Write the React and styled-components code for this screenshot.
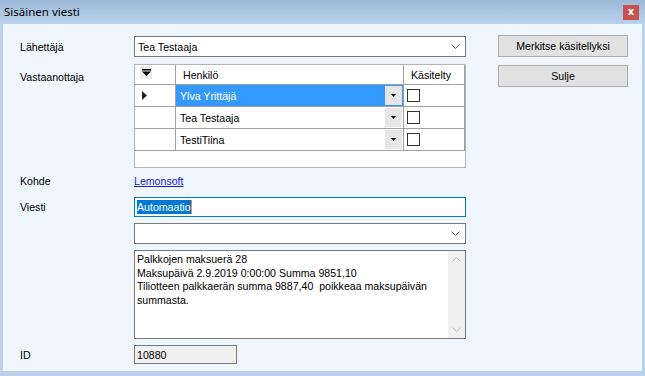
import React from "react";
import styled, { createGlobalStyle } from "styled-components";

const Global = createGlobalStyle`
  html, body { margin: 0; padding: 0; background: #fff; }
  body { font-family: "Liberation Sans", Arial, sans-serif; }
`;

const Window = styled.div`
  width: 645px;
  height: 376px;
  display: flex;
  flex-direction: column;
  background: #b9d1ea;
  box-sizing: border-box;
`;

const TitleBar = styled.div`
  height: 24px;
  flex: none;
  display: flex;
  justify-content: space-between;
  align-items: flex-start;
  padding: 0 6px 0 4px;
  background: linear-gradient(#9db9d9, #b9d1ea);
`;

const Title = styled.div`
  font-family: "Noto Sans", "Liberation Sans", sans-serif;
  font-size: 11.5px;
  line-height: 24px;
  color: #000;
`;

const CloseButton = styled.div`
  margin-top: 5px;
  width: 16px;
  height: 15px;
  background: #c75050;
  color: #fff;
  font-family: "DejaVu Sans", sans-serif;
  font-weight: bold;
  font-size: 10px;
  line-height: 14px;
  text-align: center;
`;

const Client = styled.div`
  flex: 1;
  margin: 0 3px 5px;
  background: #eff6fd;
  padding: 12px 0 0 17px;
  display: flex;
  flex-direction: column;
  font-family: "Liberation Sans", Arial, sans-serif;
  font-size: 10.6px;
  color: #000;
`;

const TopSection = styled.div`
  display: flex;
  align-items: flex-start;
`;

const TopFields = styled.div`
  display: flex;
  flex-direction: column;
`;

const ButtonColumn = styled.div`
  display: flex;
  flex-direction: column;
  gap: 8px;
  margin-left: 32px;
  margin-top: -1px;
`;

const Button = styled.div`
  width: 130px;
  height: 22px;
  box-sizing: border-box;
  border: 1px solid #adadad;
  background: #e1e1e1;
  display: flex;
  align-items: center;
  justify-content: center;
`;

const Row = styled.div`
  display: grid;
  grid-template-columns: 114px 332px;
  align-items: ${(p) => (p.$top ? "start" : "center")};
  margin-top: ${(p) => p.$mt || 0}px;
`;

const Label = styled.div`
  padding-top: ${(p) => p.$pt || 0}px;
  line-height: 14px;
`;

const Combo = styled.div`
  height: 21px;
  box-sizing: border-box;
  border: 1px solid #7a7a7a;
  background: #fff;
  display: flex;
  align-items: center;
  justify-content: space-between;
  padding: 0 5px 0 3px;
`;

const Chevron = ({ up, color = "#555" }) => (
  <svg width="9" height="5" viewBox="0 0 9 5">
    <polyline
      points={up ? "0.5,4.5 4.5,0.5 8.5,4.5" : "0.5,0.5 4.5,4.5 8.5,0.5"}
      fill="none"
      stroke={color}
      strokeWidth="1"
    />
  </svg>
);

const DataGrid = styled.div`
  height: 104px;
  box-sizing: border-box;
  border: 1px solid #b4b4b4;
  background: #fff;
  display: flex;
  flex-direction: column;
`;

const GridRow = styled.div`
  display: grid;
  grid-template-columns: 41px 228px 61px;
  height: ${(p) => p.$h}px;
`;

const Cell = styled.div`
  box-sizing: border-box;
  border-right: 1px solid #a0a0a0;
  border-bottom: 1px solid #a0a0a0;
  display: flex;
  align-items: center;
  padding-left: ${(p) => p.$pl || 0}px;
  background: ${(p) => (p.$selected ? "#3399ff" : "#fff")};
  color: ${(p) => (p.$selected ? "#fff" : "#000")};
`;

const CellText = styled.span`
  flex: 1;
  white-space: nowrap;
`;

const HeaderIcon = styled.div`
  width: 12px;
  height: 12px;
  background: #ececec;
  display: flex;
  align-items: center;
  justify-content: center;
  margin-left: 5px;
  margin-top: -4px;
`;

const DropButton = styled.div`
  width: 17px;
  align-self: stretch;
  margin: 1px 1px 1px 0;
  background: #e6e6e6;
  display: flex;
  align-items: center;
  justify-content: center;
`;

const CheckBox = styled.div`
  width: 13px;
  height: 13px;
  box-sizing: border-box;
  border: 1px solid #333;
  background: #fff;
  margin-left: 3px;
`;

const Link = styled.a`
  color: #1a1ad8;
  text-decoration: underline;
  line-height: 16px;
  width: fit-content;
`;

const TextBox = styled.div`
  box-sizing: border-box;
  border: 1px solid ${(p) => (p.$focused ? "#0078d7" : "#7a7a7a")};
  background: ${(p) => (p.$readonly ? "#f0f0f0" : "#fff")};
  display: flex;
  align-items: center;
  padding-left: 2px;
  width: ${(p) => p.$w || 332}px;
  height: ${(p) => p.$h || 20}px;
`;

const Selection = styled.span`
  background: #0078d7;
  color: #fff;
  line-height: 14px;
`;

const Caret = styled.span`
  width: 1px;
  height: 14px;
  background: #f08a2c;
`;

const MultiLine = styled.div`
  height: 89px;
  box-sizing: border-box;
  border: 1px solid #7a7a7a;
  background: #fff;
  display: flex;
`;

const MultiText = styled.div`
  flex: 1;
  padding: 2px 2px 0 2px;
  white-space: pre;
  line-height: 13.7px;
`;

const ScrollBar = styled.div`
  width: 17px;
  background: #f0f0f0;
  display: flex;
  flex-direction: column;
  justify-content: space-between;
  align-items: center;
  padding: 6px 0;
`;

const message = `Palkkojen maksuerä 28
Maksupäivä 2.9.2019 0:00:00 Summa 9851,10
Tiliotteen palkkaerän summa 9887,40  poikkeaa maksupäivän
summasta.`;

const rows = [
  { name: "Ylva Yrittäjä", current: true },
  { name: "Tea Testaaja" },
  { name: "TestiTiina" },
];

const SmallDown = () => (
  <svg width="5" height="3" viewBox="0 0 5 3">
    <polygon points="0,0 5,0 2.5,3" fill="#000" />
  </svg>
);

export default function App() {
  return (
    <>
      <Global />
      <Window>
        <TitleBar>
          <Title>Sisäinen viesti</Title>
          <CloseButton>x</CloseButton>
        </TitleBar>
        <Client>
          <TopSection>
            <TopFields>
              <Row>
                <Label>Lähettäjä</Label>
                <Combo>
                  <span>Tea Testaaja</span>
                  <Chevron />
                </Combo>
              </Row>
              <Row $mt={7} $top>
                <Label $pt={6}>Vastaanottaja</Label>
                <DataGrid>
                  <GridRow $h={20}>
                    <Cell>
                      <HeaderIcon>
                        <svg width="9" height="7" viewBox="0 0 9 7">
                          <rect x="0" y="0" width="9" height="1.5" fill="#000" />
                          <polygon points="0,2.5 9,2.5 4.5,7" fill="#000" />
                        </svg>
                      </HeaderIcon>
                    </Cell>
                    <Cell $pl={7}>Henkilö</Cell>
                    <Cell $pl={7}>Käsitelty</Cell>
                  </GridRow>
                  {rows.map((r) => (
                    <GridRow $h={22} key={r.name}>
                      <Cell $pl={7}>
                        {r.current && (
                          <svg width="5" height="9" viewBox="0 0 5 9">
                            <polygon points="0,0 5,4.5 0,9" fill="#222" />
                          </svg>
                        )}
                      </Cell>
                      <Cell $pl={4} $selected={r.current}>
                        <CellText>{r.name}</CellText>
                        <DropButton>
                          <SmallDown />
                        </DropButton>
                      </Cell>
                      <Cell>
                        <CheckBox />
                      </Cell>
                    </GridRow>
                  ))}
                </DataGrid>
              </Row>
            </TopFields>
            <ButtonColumn>
              <Button>Merkitse käsitellyksi</Button>
              <Button>Sulje</Button>
            </ButtonColumn>
          </TopSection>
          <Row $mt={5}>
            <Label>Kohde</Label>
            <Link>Lemonsoft</Link>
          </Row>
          <Row $mt={8}>
            <Label>Viesti</Label>
            <TextBox $focused>
              <Selection>Automaatio</Selection>
              <Caret />
            </TextBox>
          </Row>
          <Row $mt={6}>
            <span />
            <Combo>
              <span />
              <Chevron />
            </Combo>
          </Row>
          <Row $mt={6}>
            <span />
            <MultiLine>
              <MultiText>{message}</MultiText>
              <ScrollBar>
                <Chevron up color="#c2c2c2" />
                <Chevron color="#c2c2c2" />
              </ScrollBar>
            </MultiLine>
          </Row>
          <Row $mt={6}>
            <Label>ID</Label>
            <TextBox $readonly $w={103} $h={19}>
              10880
            </TextBox>
          </Row>
        </Client>
      </Window>
    </>
  );
}
